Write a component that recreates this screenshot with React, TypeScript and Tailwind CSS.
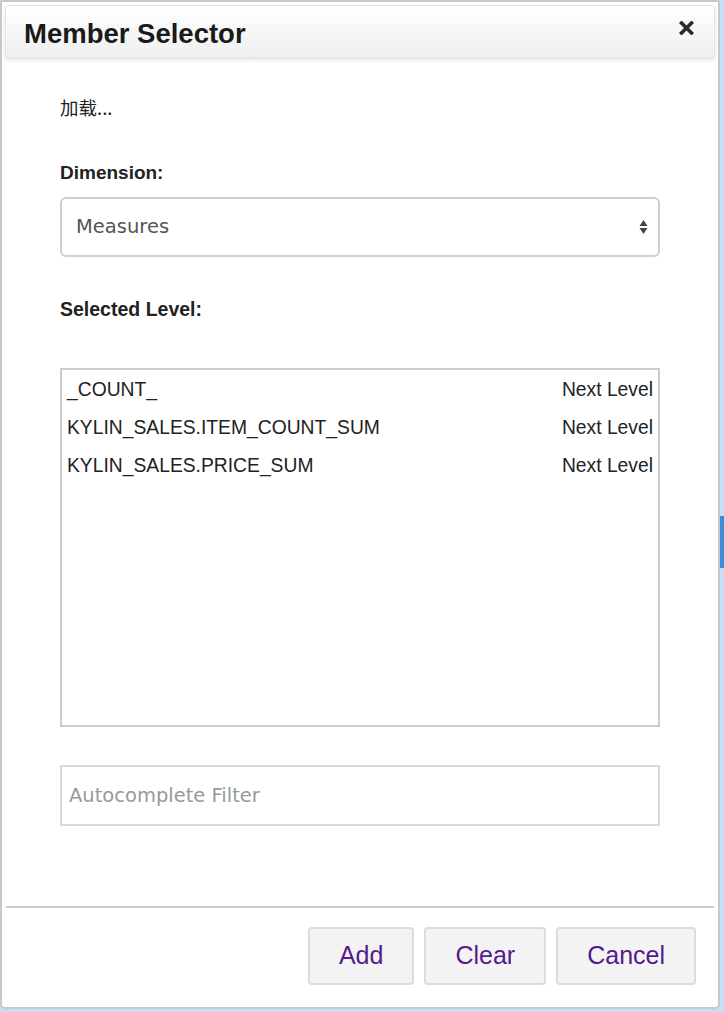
const LEVELS = ['_COUNT_', 'KYLIN_SALES.ITEM_COUNT_SUM', 'KYLIN_SALES.PRICE_SUM'];

const sans = "font-['Liberation_Sans',Arial,sans-serif]";

export default function App() {
  return (
    <div className="flex h-[1012px] w-[724px] overflow-hidden bg-[#c6ddf7]">
      {/* Dialog */}
      <div className="flex h-[1009px] w-[720px] shrink-0 flex-col rounded-t-[3px] rounded-b-[5px] border-2 border-[#c8c8c8] bg-white">
        {/* Header */}
        <div className="mt-[3px] ml-[3px] mr-[3px] flex h-[53px] items-center justify-between rounded-[3px] border border-[#e4e4e4] bg-linear-to-b from-white to-[#efefef] pl-[18px] pr-[20px] shadow-[0_2px_4px_rgba(0,0,0,0.12)]">
          <h1 className={`${sans} pt-[4px] text-[27.5px] font-bold leading-none text-[#1a1a1a]`}>Member Selector</h1>
          <svg width="15" height="14" viewBox="0 0 15 14" className="mt-[-8px]">
            <path d="M2.5 2 L12.5 12 M12.5 2 L2.5 12" stroke="#2b2b2b" strokeWidth="3.6" strokeLinecap="square" />
          </svg>
        </div>

        {/* Body */}
        <div className="flex flex-col pl-[58px] pr-[58px]">
          <p className="mt-[37px] font-['Noto_Sans_CJK_SC',sans-serif] text-[18.5px] leading-[24px] text-[#222]">加载...</p>

          <label className={`${sans} mt-[42px] text-[19px] font-bold leading-[24px] text-[#222]`}>Dimension:</label>
          <div className="mt-[12px] flex h-[60px] items-center justify-between rounded-[6px] border-2 border-[#d0d0d0] pl-[14px] pr-[10px]">
            <span className="font-['DejaVu_Sans',sans-serif] text-[19.5px] text-[#555]">Measures</span>
            <svg width="9" height="16" viewBox="0 0 9 16">
              <path d="M4.5 1 L8.5 7 L0.5 7 Z" fill="#444" />
              <path d="M4.5 15 L8.5 9 L0.5 9 Z" fill="#444" />
            </svg>
          </div>

          <label className={`${sans} mt-[40px] text-[19.5px] font-bold leading-[24px] text-[#222]`}>Selected Level:</label>
          <div className="mt-[47px] flex h-[359px] flex-col border-2 border-[#cccccc] pt-[1px]">
            {LEVELS.map((l) => (
              <div key={l} className={`${sans} flex h-[38px] items-center justify-between pl-[5px] pr-[5px] text-[19.3px] text-[#222]`}>
                <span>{l}</span>
                <span>Next Level</span>
              </div>
            ))}
          </div>

          <div className="mt-[38px] flex h-[61px] items-center border-2 border-[#d5dae2] pl-[7px]">
            <span className="font-['DejaVu_Sans',sans-serif] text-[19.5px] text-[#999]">Autocomplete Filter</span>
          </div>
        </div>

        {/* Footer */}
        <div className="mt-[80px] ml-[4px] mr-[4px] h-[2px] bg-[#cccccc]" />
        <div className="mt-[19px] flex justify-end gap-[10px] pr-[22px]">
          {['Add', 'Clear', 'Cancel'].map((b) => (
            <button
              key={b}
              className={`${sans} h-[58px] rounded-[4px] border-2 border-[#dcdcdc] bg-[#f3f3f3] px-[29px] text-[25px] text-[#551a8b]`}
            >
              {b}
            </button>
          ))}
        </div>
      </div>

      {/* Page behind the dialog */}
      <div className="flex flex-1 flex-col">
        <div className="mt-[516px] h-[52px] bg-[#3a8ddb]" />
      </div>
    </div>
  );
}
